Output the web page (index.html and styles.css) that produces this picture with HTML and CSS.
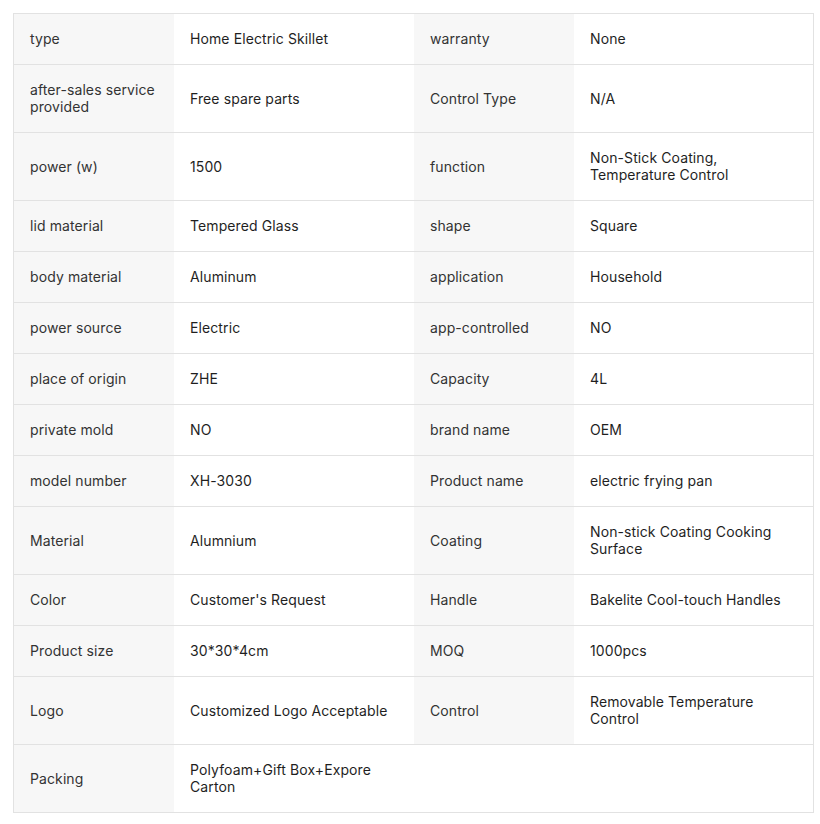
FILE: index.html
```html
<!DOCTYPE html>
<html>
<head>
<meta charset="utf-8">
<link rel="stylesheet" href="styles.css">
</head>
<body>
<div class="specs">
  <div class="row"><div class="k">type</div><div class="v">Home Electric Skillet</div><div class="k">warranty</div><div class="v">None</div></div>
  <div class="row"><div class="k">after-sales service provided</div><div class="v">Free spare parts</div><div class="k">Control Type</div><div class="v">N/A</div></div>
  <div class="row"><div class="k">power (w)</div><div class="v">1500</div><div class="k">function</div><div class="v">Non-Stick Coating, Temperature Control</div></div>
  <div class="row"><div class="k">lid material</div><div class="v">Tempered Glass</div><div class="k">shape</div><div class="v">Square</div></div>
  <div class="row"><div class="k">body material</div><div class="v">Aluminum</div><div class="k">application</div><div class="v">Household</div></div>
  <div class="row"><div class="k">power source</div><div class="v">Electric</div><div class="k">app-controlled</div><div class="v">NO</div></div>
  <div class="row"><div class="k">place of origin</div><div class="v">ZHE</div><div class="k">Capacity</div><div class="v">4L</div></div>
  <div class="row"><div class="k">private mold</div><div class="v">NO</div><div class="k">brand name</div><div class="v">OEM</div></div>
  <div class="row"><div class="k">model number</div><div class="v">XH-3030</div><div class="k">Product name</div><div class="v">electric frying pan</div></div>
  <div class="row"><div class="k">Material</div><div class="v">Alumnium</div><div class="k">Coating</div><div class="v">Non-stick Coating Cooking Surface</div></div>
  <div class="row"><div class="k">Color</div><div class="v">Customer's Request</div><div class="k">Handle</div><div class="v">Bakelite Cool-touch Handles</div></div>
  <div class="row"><div class="k">Product size</div><div class="v">30*30*4cm</div><div class="k">MOQ</div><div class="v">1000pcs</div></div>
  <div class="row"><div class="k">Logo</div><div class="v">Customized Logo Acceptable</div><div class="k">Control</div><div class="v">Removable Temperature Control</div></div>
  <div class="row"><div class="k">Packing</div><div class="v">Polyfoam+Gift Box+Expore Carton</div><div class="e"></div><div class="e"></div></div>
</div>
</body>
</html>
```
FILE: styles.css
```css
html, body {
  margin: 0;
  padding: 0;
  background: #fff;
}
body {
  padding: 13px;
  font-family: Inter, "Noto Sans", sans-serif;
  font-size: 14px;
  line-height: 17px;
  letter-spacing: 0.1px;
}
.specs {
  box-sizing: border-box;
  width: 801px;
  border: 1px solid #e2e2e2;
}
.row {
  display: grid;
  grid-template-columns: 160px 240px 160px 239px;
  border-top: 1px solid #e2e2e2;
}
.row:first-child {
  border-top: none;
}
.k, .v, .e {
  display: flex;
  align-items: center;
  padding: 16px 16px 17px 16px;
}
.k {
  background: #f7f7f7;
  color: #333;
}
.v {
  background: #fff;
  color: #1f1f1f;
}
.e {
  background: #fff;
}
```
